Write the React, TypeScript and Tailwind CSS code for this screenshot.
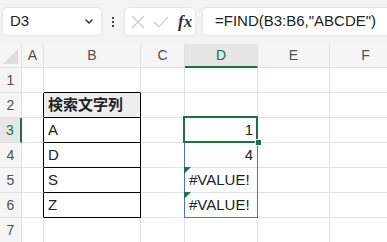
import React from "react";

const cols = [22, 22, 97, 44, 73, 72, 72];
const letters = ["A", "B", "C", "D", "E", "F"];
const G = "#1e7145";
const LINE = "border-[#e1e1e1]";

function HeaderRow() {
  return (
    <div className="flex h-[24px] bg-[#f5f5f5]">
      <div className={`relative w-[22px] shrink-0 border-r border-b ${LINE}`}>
        <svg className="absolute right-[3px] bottom-[3px]" width="15" height="15" viewBox="0 0 15 15">
          <polygon points="15,0 15,15 0,15" fill="#dcdcdc" />
        </svg>
      </div>
      {letters.map((l, i) => {
        const sel = l === "D";
        return (
          <div
            key={l}
            className={`shrink-0 flex items-center justify-center text-[14px] ${sel ? "bg-[#e6e6e6] text-[#1e7145] border-b-2 border-b-[#1e7145] border-r border-r-[#e1e1e1]" : "text-[#505050] border-r border-b border-[#e1e1e1]"}`}
            style={{ width: cols[i + 1] }}
          >
            {l}
          </div>
        );
      })}
    </div>
  );
}

type Cell = { text?: string; align?: "left" | "right"; bold?: boolean; fill?: string; tri?: boolean };

function Row({ n, cells }: { n: number; cells: Record<number, Cell> }) {
  const sel = n === 3;
  return (
    <div className="flex h-[25px]">
      <div
        className={`w-[22px] shrink-0 flex items-center justify-center text-[14px] ${sel ? "bg-[#e6e6e6] text-[#1e7145] border-r-2 border-r-[#1e7145] border-b border-b-[#e1e1e1]" : "bg-[#f5f5f5] text-[#505050] border-r border-b border-[#e1e1e1]"}`}
      >
        {n}
      </div>
      {letters.map((l, i) => {
        const c = cells[i] || {};
        const inTable = n >= 2 && n <= 6;
        let cls = "border-r border-b border-[#e1e1e1]";
        if (i === 0 && inTable) cls = "border-r border-r-black border-b border-b-[#e1e1e1]";
        if (i === 1 && inTable) cls = "border-r border-b border-black";
        if (i === 1 && n === 1) cls = "border-r border-r-[#e1e1e1] border-b border-b-black";
        return (
          <div
            key={l}
            className={`relative shrink-0 flex items-center px-[4px] text-[15px] text-[#222] ${cls} ${c.align === "right" ? "justify-end" : "justify-start"} ${c.bold ? "font-bold" : ""} ${i === 3 && n === 3 ? "z-10" : ""}`}
            style={{ width: cols[i + 1], background: c.fill }}
          >
            {c.tri && (
              <svg className="absolute left-[-1px] top-[-1px] z-20" width="7" height="7" viewBox="0 0 7 7">
                <polygon points="0,0 7,0 0,7" fill={G} />
              </svg>
            )}
            {c.text}
            {i === 3 && n === 3 && (
              <>
                <div className="absolute left-[-1px] top-[-1px] w-[74px] h-[101px] border border-[#4a75b5] pointer-events-none" />
                <div className="absolute left-[-2px] top-[-2px] w-[75px] h-[27px] border-2 border-[#1e7145]" />
                <div className="absolute right-[-5px] bottom-[-4px] w-[7px] h-[7px] bg-[#1e7145] border border-white z-10" />
              </>
            )}
          </div>
        );
      })}
    </div>
  );
}

export default function App() {
  const jp = { fontFamily: '"Liberation Sans", "Noto Sans CJK JP", sans-serif' };
  return (
    <div className="w-[387px] h-[242px] overflow-hidden bg-white" style={jp}>
      <div className="h-[44px] bg-[#f3f3f3] flex items-start pt-[7px] pl-[2px]">
        <div className="w-[100px] h-[29px] bg-white rounded-[5px] border border-[#e6e6e6] flex items-center justify-between pl-[7px] pr-[7px] text-[15px] text-[#222]">
          <span>D3</span>
          <svg width="10" height="7" viewBox="0 0 10 7">
            <path d="M1.5 1.5 L5 5 L8.5 1.5" fill="none" stroke="#333" strokeWidth="1.5" />
          </svg>
        </div>
        <div className="w-[22px] h-[29px] flex flex-col items-center justify-center gap-[2px]">
          <div className="w-[2px] h-[2px] bg-[#444]" />
          <div className="w-[2px] h-[2px] bg-[#444]" />
          <div className="w-[2px] h-[2px] bg-[#444]" />
        </div>
        <div className="w-[72px] h-[29px] bg-white rounded-[5px] border border-[#e6e6e6] flex items-center pl-[6px] gap-[8px]">
          <svg width="14" height="14" viewBox="0 0 14 14">
            <path d="M1 1 L13 13 M13 1 L1 13" stroke="#c8c8c8" strokeWidth="1.1" />
          </svg>
          <svg width="16" height="12" viewBox="0 0 16 12">
            <path d="M1 6 L6 11 L15 1" fill="none" stroke="#c8c8c8" strokeWidth="1.1" />
          </svg>
          <span className="text-[17px] italic text-[#333] ml-[1px]" style={{ fontFamily: '"Liberation Serif", serif', fontWeight: 600 }}>
            fx
          </span>
        </div>
        <div className="ml-[6px] flex-1 h-[29px] bg-white rounded-l-[5px] border border-r-0 border-[#e6e6e6] flex items-center pl-[12px] text-[15px] text-[#222]">
          =FIND(B3:B6,"ABCDE")
        </div>
      </div>
      <HeaderRow />
      <Row n={1} cells={{}} />
      <Row n={2} cells={{ 1: { text: "検索文字列", bold: true, fill: "#eeeeee" } }} />
      <Row n={3} cells={{ 1: { text: "A" }, 3: { text: "1", align: "right" } }} />
      <Row n={4} cells={{ 1: { text: "D" }, 3: { text: "4", align: "right" } }} />
      <Row n={5} cells={{ 1: { text: "S" }, 3: { text: "#VALUE!", tri: true } }} />
      <Row n={6} cells={{ 1: { text: "Z" }, 3: { text: "#VALUE!", tri: true } }} />
      <Row n={7} cells={{}} />
    </div>
  );
}
